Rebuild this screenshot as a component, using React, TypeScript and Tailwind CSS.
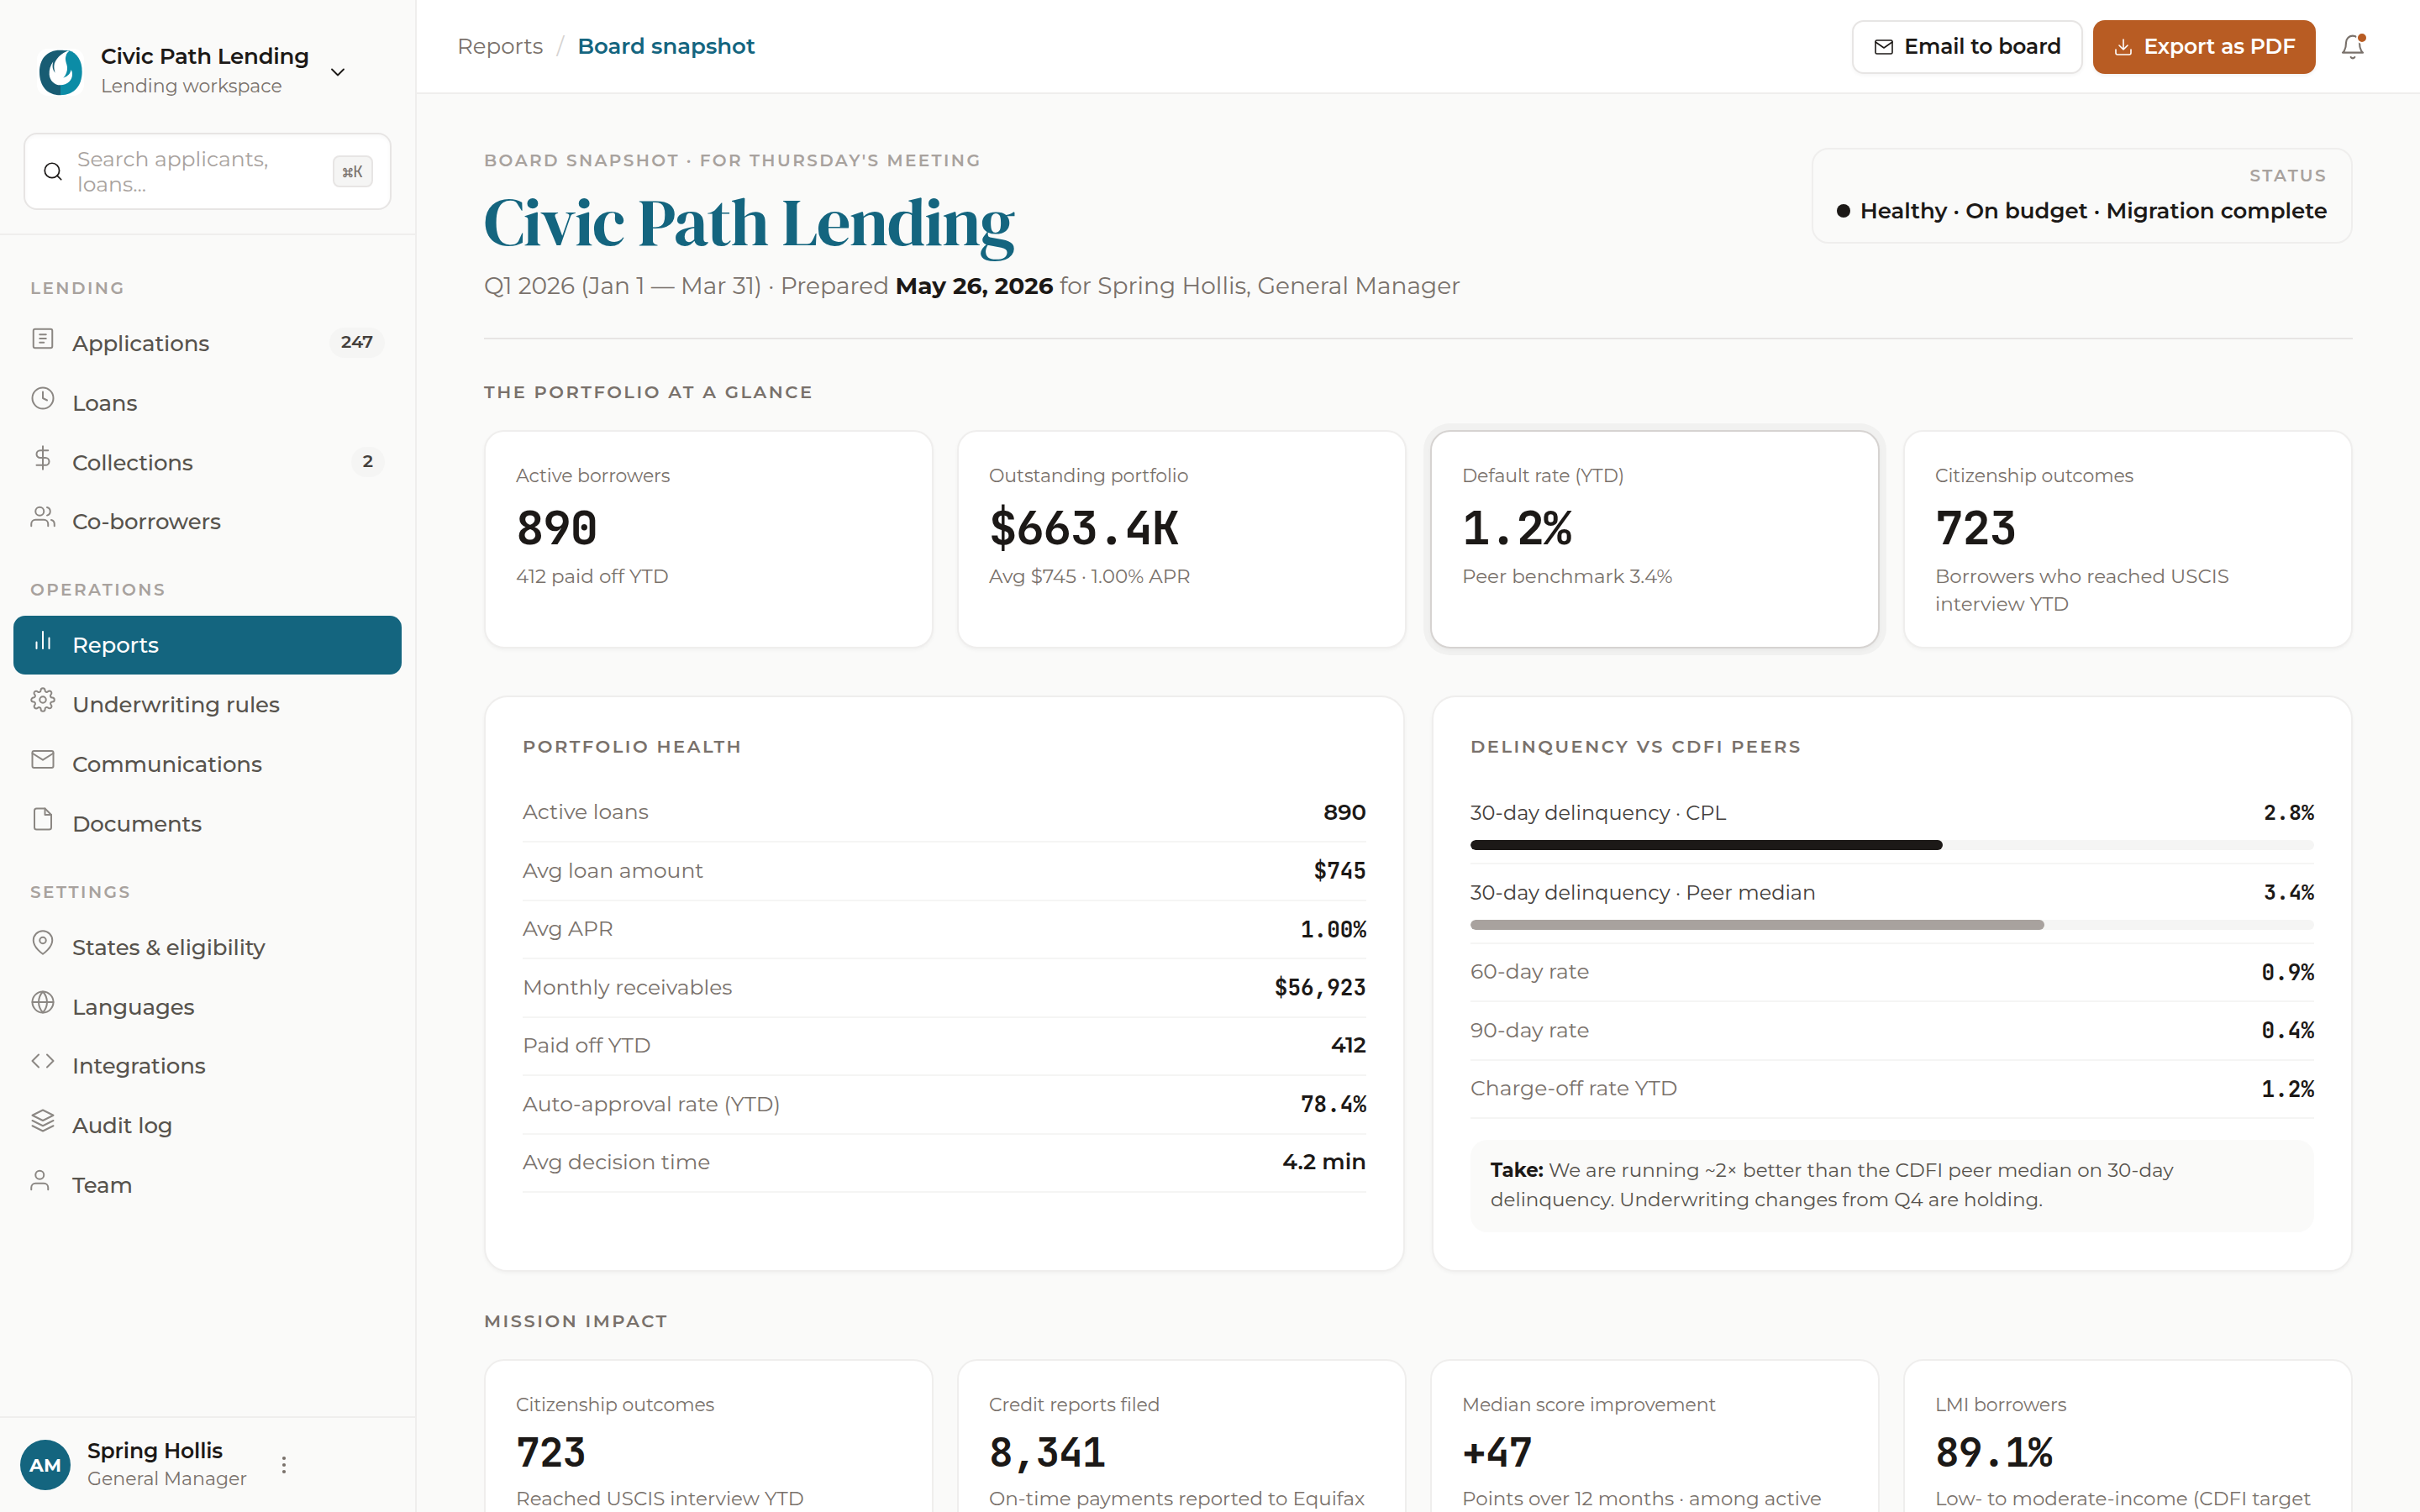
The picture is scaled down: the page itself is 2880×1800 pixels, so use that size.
import type { ReactNode } from 'react';
import clsx from 'clsx';

const navGroups = [
    {
        title: 'Lending',
        items: [
            { label: 'Applications', icon: 'applications', badge: '247' },
            { label: 'Loans', icon: 'clock' },
            { label: 'Collections', icon: 'dollar', badge: '2' },
            { label: 'Co-borrowers', icon: 'users' },
        ],
    },
    {
        title: 'Operations',
        items: [
            { label: 'Reports', icon: 'chart', active: true },
            { label: 'Underwriting rules', icon: 'settings' },
            { label: 'Communications', icon: 'mail' },
            { label: 'Documents', icon: 'file' },
        ],
    },
    {
        title: 'Settings',
        items: [
            { label: 'States & eligibility', icon: 'pin' },
            { label: 'Languages', icon: 'globe' },
            { label: 'Integrations', icon: 'code' },
            { label: 'Audit log', icon: 'layers' },
            { label: 'Team', icon: 'user' },
        ],
    },
];

const glance = [
    { label: 'Active borrowers', value: '890', note: '412 paid off YTD' },
    {
        label: 'Outstanding portfolio',
        value: '$663.4K',
        note: 'Avg $745 · 1.00% APR',
    },
    {
        label: 'Default rate (YTD)',
        value: '1.2%',
        note: 'Peer benchmark 3.4%',
        highlight: true,
    },
    {
        label: 'Citizenship outcomes',
        value: '723',
        note: 'Borrowers who reached USCIS interview YTD',
    },
];

const health = [
    { label: 'Active loans', value: '890' },
    { label: 'Avg loan amount', value: '$745', mono: true },
    { label: 'Avg APR', value: '1.00%', mono: true },
    { label: 'Monthly receivables', value: '$56,923', mono: true },
    { label: 'Paid off YTD', value: '412' },
    { label: 'Auto-approval rate (YTD)', value: '78.4%', mono: true },
    { label: 'Avg decision time', value: '4.2 min' },
];

const bars = [
    {
        label: '30-day delinquency · CPL',
        value: '2.8%',
        width: 56,
        color: 'bg-[#1c1917]',
    },
    {
        label: '30-day delinquency · Peer median',
        value: '3.4%',
        width: 68,
        color: 'bg-[#a8a29e]',
    },
];

const rates = [
    { label: '60-day rate', value: '0.9%', mono: true },
    { label: '90-day rate', value: '0.4%', mono: true },
    { label: 'Charge-off rate YTD', value: '1.2%', mono: true },
];

const impact = [
    {
        label: 'Citizenship outcomes',
        value: '723',
        note: 'Reached USCIS interview YTD',
    },
    {
        label: 'Credit reports filed',
        value: '8,341',
        note: 'On-time payments reported to Equifax',
    },
    {
        label: 'Median score improvement',
        value: '+47',
        note: 'Points over 12 months · among active',
    },
    {
        label: 'LMI borrowers',
        value: '89.1%',
        note: 'Low- to moderate-income (CDFI target',
    },
];

const icons: Record<string, ReactNode> = {
    applications: (
        <>
            <rect x="3" y="3" width="18" height="18" rx="1.6" />
            <path d="M9 8.2h6M9 12h6M9 15.8h4" />
        </>
    ),
    clock: (
        <>
            <circle cx="12" cy="12" r="10" />
            <path d="M12 6v6l4 2" />
        </>
    ),
    dollar: (
        <path d="M12 1v22M17 5H9.5a3.5 3.5 0 0 0 0 7h5a3.5 3.5 0 0 1 0 7H6" />
    ),
    users: (
        <>
            <path d="M17 21v-2a4 4 0 0 0-4-4H5a4 4 0 0 0-4 4v2" />
            <circle cx="9" cy="7" r="4" />
            <path d="M23 21v-2a4 4 0 0 0-3-3.87M16 3.13a4 4 0 0 1 0 7.75" />
        </>
    ),
    chart: <path d="M18 20V10M12 20V4M6 20v-6" />,
    settings: (
        <>
            <circle cx="12" cy="12" r="3" />
            <path d="M19.4 15a1.65 1.65 0 0 0 .33 1.82l.06.06a2 2 0 0 1 0 2.83 2 2 0 0 1-2.83 0l-.06-.06a1.65 1.65 0 0 0-1.82-.33 1.65 1.65 0 0 0-1 1.51V21a2 2 0 0 1-2 2 2 2 0 0 1-2-2v-.09A1.65 1.65 0 0 0 9 19.4a1.65 1.65 0 0 0-1.82.33l-.06.06a2 2 0 0 1-2.83 0 2 2 0 0 1 0-2.83l.06-.06a1.65 1.65 0 0 0 .33-1.82 1.65 1.65 0 0 0-1.51-1H3a2 2 0 0 1-2-2 2 2 0 0 1 2-2h.09A1.65 1.65 0 0 0 4.6 9a1.65 1.65 0 0 0-.33-1.82l-.06-.06a2 2 0 0 1 0-2.83 2 2 0 0 1 2.83 0l.06.06a1.65 1.65 0 0 0 1.82.33H9a1.65 1.65 0 0 0 1-1.51V3a2 2 0 0 1 2-2 2 2 0 0 1 2 2v.09a1.65 1.65 0 0 0 1 1.51 1.65 1.65 0 0 0 1.82-.33l.06-.06a2 2 0 0 1 2.83 0 2 2 0 0 1 0 2.83l-.06.06a1.65 1.65 0 0 0-.33 1.82V9a1.65 1.65 0 0 0 1.51 1H21a2 2 0 0 1 2 2 2 2 0 0 1-2 2h-.09a1.65 1.65 0 0 0-1.51 1z" />
        </>
    ),
    mail: (
        <>
            <rect x="2" y="4" width="20" height="16" rx="1.6" />
            <path d="m2 6.2 10 6.3 10-6.3" />
        </>
    ),
    file: (
        <>
            <path d="M14 2H6a2 2 0 0 0-2 2v16a2 2 0 0 0 2 2h12a2 2 0 0 0 2-2V8z" />
            <path d="M14 2v6h6" />
        </>
    ),
    pin: (
        <>
            <path d="M21 10c0 7-9 13-9 13s-9-6-9-13a9 9 0 0 1 18 0z" />
            <circle cx="12" cy="10" r="3" />
        </>
    ),
    globe: (
        <>
            <circle cx="12" cy="12" r="10" />
            <path d="M2 12h20M12 2a15.3 15.3 0 0 1 4 10 15.3 15.3 0 0 1-4 10 15.3 15.3 0 0 1-4-10 15.3 15.3 0 0 1 4-10z" />
        </>
    ),
    code: <path d="m16 18 6-6-6-6M8 6l-6 6 6 6" />,
    layers: (
        <>
            <path d="M12 2 2 7l10 5 10-5-10-5z" />
            <path d="m2 17 10 5 10-5M2 12l10 5 10-5" />
        </>
    ),
    user: (
        <>
            <path d="M17 21v-2a4 4 0 0 0-4-4H5a4 4 0 0 0-4 4v2" />
            <circle cx="9" cy="7" r="4" />
        </>
    ),
    search: (
        <>
            <circle cx="11" cy="11" r="8" />
            <path d="m21 21-4.35-4.35" />
        </>
    ),
    envelope: (
        <>
            <rect x="2" y="4" width="20" height="16" rx="1.6" />
            <path d="m2 6 10 7 10-7" />
        </>
    ),
    chevron: <path d="m6 9 6 6 6-6" />,
    download: (
        <path d="M21 15v4a2 2 0 0 1-2 2H5a2 2 0 0 1-2-2v-4M7 10l5 5 5-5M12 15V3" />
    ),
    bell: (
        <>
            <path d="M18 8A6 6 0 0 0 6 8c0 7-3 9-3 9h18s-3-2-3-9" />
            <path d="M13.73 21a2 2 0 0 1-3.46 0" />
        </>
    ),
};

function Icon({ name, className }: { name: string; className?: string }) {
    return (
        <svg
            viewBox="0 0 24 24"
            fill="none"
            stroke="currentColor"
            strokeWidth="1.6"
            strokeLinecap="round"
            strokeLinejoin="round"
            className={clsx('shrink-0', className)}
        >
            {icons[name]}
        </svg>
    );
}

function Logo() {
    return (
        <svg viewBox="0 0 168 168" className="size-14 shrink-0">
            <rect width="168" height="168" rx="38" fill="#fff" />
            <path
                d="M84 6h29c30 8 48 36 48 76 0 50-28 84-77 84z"
                fill="#0c8ca6"
            />
            <path
                d="M84 166C36 166 9 132 9 84S36 4 84 5c10 0 18 1 26 4L84 44z"
                fill="#185c73"
            />
            <path
                d="M112 7C90 14 62 38 61 62c0 10 2 18 4 24-8-8-12-22-7-40-10 14-15 29-14 46 2 22 18 38 40 38 24 0 43-18 42-40 0-6-2-10-4-15-3 13-10 23-28 29 10-10 15-24 14-38-2-16-10-26-4-42 2-7 6-12 10-14z"
                fill="#fff"
            />
        </svg>
    );
}

function Sidebar() {
    return (
        <aside className="flex w-[496px] shrink-0 flex-col border-r-2 border-[#efeeed]">
            <div className="h-[280px] border-b-2 border-[#efeeed] px-7 pt-[51px]">
                <div className="flex h-[107px] items-start pl-4">
                    <div className="mt-[7px]">
                        <Logo />
                    </div>
                    <div className="ml-5">
                        <p className="text-[26px] leading-8 font-semibold tracking-[-0.22px] whitespace-nowrap text-stone-900">
                            Civic Path Lending
                        </p>
                        <p className="mt-1.5 text-[22px] leading-7 text-stone-500">
                            Lending workspace
                        </p>
                    </div>
                    <Icon
                        name="chevron"
                        className="mt-[21px] ml-5 size-7 text-stone-900"
                    />
                </div>
                <div className="flex h-[92px] w-[438px] items-center rounded-2xl border-2 border-[#e7e5e4] bg-white px-5 shadow-[inset_0_2px_4px_rgba(28,25,23,0.03)]">
                    <Icon name="search" className="size-[26px] text-stone-900" />
                    <p className="ml-4 flex-1 text-[25px] leading-[30px] text-[#a8a29e]">
                        Search applicants, loans...
                    </p>
                    <kbd className="grid h-[38px] w-12 shrink-0 place-items-center rounded-lg border-2 border-[#e7e5e4] bg-[#f5f5f4] font-['JetBrains_Mono','DejaVu_Sans_Mono',monospace] text-[20px] leading-6 text-stone-500">
                        ⌘K
                    </kbd>
                </div>
            </div>
            <nav className="flex-1 px-4 pt-12">
                {navGroups.map((group) => (
                    <div key={group.title} className="mb-[31px]">
                        <h3 className="mb-4 pl-5 text-[20px] leading-[30px] font-semibold tracking-[2.45px] text-[#a8a29e] uppercase">
                            {group.title}
                        </h3>
                        {group.items.map((item) => (
                            <NavItem key={item.label} {...item} />
                        ))}
                    </div>
                ))}
            </nav>
            <div className="flex h-[114px] items-start border-t-2 border-[#efeeed] pt-[23px] pl-6">
                <span className="mt-[3px] grid size-[60px] place-items-center rounded-full bg-[#14657f] text-[22px] font-bold text-white">
                    AM
                </span>
                <div className="ml-5">
                    <p className="text-[25px] leading-8 font-semibold tracking-[-0.13px] text-stone-900">
                        Spring Hollis
                    </p>
                    <p className="mt-0.5 text-[22px] leading-8 text-stone-500">
                        General Manager
                    </p>
                </div>
                <svg
                    viewBox="0 0 28 28"
                    className="mt-[19px] ml-[30px] size-7 text-stone-500"
                    fill="currentColor"
                >
                    <circle cx="14" cy="6" r="2.1" />
                    <circle cx="14" cy="14" r="2.1" />
                    <circle cx="14" cy="22" r="2.1" />
                </svg>
            </div>
        </aside>
    );
}

function NavItem({
    label,
    icon,
    badge,
    active,
}: {
    label: string;
    icon: string;
    badge?: string;
    active?: boolean;
}) {
    return (
        <a
            className={clsx(
                'mb-[0.8px] flex h-[70px] items-start rounded-[14px] px-5',
                active ? 'bg-[#14657f] text-white' : 'text-stone-600',
            )}
        >
            <Icon
                name={icon}
                className={clsx(
                    'mt-3.5 size-[30px]',
                    !active && 'text-[#8b8783]',
                )}
            />
            <span className="ml-5 flex-1 text-[26px] leading-[70px] font-medium tracking-[-0.13px]">
                {label}
            </span>
            {badge && (
                <span className="mt-4 h-9 rounded-full bg-[#f5f5f4] px-3.5 text-[21px] leading-[34px] font-semibold text-[#44403c]">
                    {badge}
                </span>
            )}
        </a>
    );
}

function Topbar() {
    return (
        <header className="flex h-28 shrink-0 items-center border-b-2 border-[#efeeed] bg-white pr-12 pl-12">
            <div className="flex flex-1 text-[26px] leading-9">
                <span className="text-stone-500">Reports</span>
                <span className="mx-4 text-[#d6d3d1]">/</span>
                <span className="font-semibold text-[#14657f]">
                    Board snapshot
                </span>
            </div>
            <div className="mt-0.5 flex gap-3 text-[25px] font-semibold tracking-[-0.1px]">
                <button className="flex h-16 items-center gap-3 rounded-[14px] border-2 border-[#e7e5e4] bg-white px-6 pb-px text-stone-900 shadow-[0_2px_4px_rgba(28,25,23,0.04)]">
                    <Icon name="envelope" className="size-6" />
                    Email to board
                </button>
                <button className="flex h-16 items-center gap-3 rounded-[14px] bg-[#b85c23] px-6 pb-px text-white shadow-[0_2px_4px_rgba(28,25,23,0.06)]">
                    <Icon name="download" className="size-6" />
                    Export as PDF
                </button>
                <button className="relative grid size-16 place-items-center">
                    <Icon name="bell" className="size-8 text-stone-500" />
                    <span className="absolute top-3.5 right-3.5 size-[14px] rounded-full border-2 border-white bg-[#b85c23]" />
                </button>
            </div>
        </header>
    );
}

function SectionTitle({ children }: { children: ReactNode }) {
    return (
        <h2 className="text-[21px] leading-[31px] font-semibold tracking-[2.52px] text-stone-500 uppercase">
            {children}
        </h2>
    );
}

function StatCard({
    label,
    value,
    note,
    highlight,
    small,
}: {
    label: string;
    value: string;
    note: string;
    highlight?: boolean;
    small?: boolean;
}) {
    return (
        <div
            className={clsx(
                'rounded-3xl border-2 bg-white px-9 pt-9 text-stone-500',
                small ? 'h-[250px]' : 'h-[260px]',
                highlight
                    ? 'border-[#d6d3d1] shadow-[0_0_0_8px_rgba(28,25,23,0.04),0_2px_4px_rgba(28,25,23,0.04)]'
                    : 'border-[#efeeed]',
                !highlight && !small && 'shadow-[0_2px_4px_rgba(28,25,23,0.04)]',
            )}
        >
            <p className="text-[22px] leading-[33px] tracking-[-0.09px]">
                {label}
            </p>
            <p
                className={clsx(
                    "font-['JetBrains_Mono','DejaVu_Sans_Mono',monospace] font-semibold text-stone-900",
                    small
                        ? 'mt-3 text-[48px] leading-[56px] tracking-[-1.1px]'
                        : 'mt-[13px] text-[56px] leading-[64px] tracking-[-1.35px]',
                )}
            >
                {value}
            </p>
            <p
                className={clsx(
                    'text-[23px] leading-[33px]',
                    small ? 'mt-[11px]' : 'mt-2.5',
                )}
            >
                {note}
            </p>
        </div>
    );
}

function Panel({ title, children }: { title: string; children: ReactNode }) {
    return (
        <section className="h-[686px] rounded-[28px] border-2 border-[#efeeed] bg-white px-11 pt-[43px] shadow-[0_2px_4px_rgba(28,25,23,0.04)]">
            <SectionTitle>{title}</SectionTitle>
            <div className="mt-[30px]">{children}</div>
        </section>
    );
}

function Row({
    label,
    value,
    mono,
}: {
    label: string;
    value: string;
    mono?: boolean;
}) {
    return (
        <div className="flex h-[69.45px] items-center justify-between border-b-2 border-[#f5f5f4] pb-px">
            <span className="text-[25px] text-stone-500">{label}</span>
            <span
                className={clsx(
                    'text-[26px] font-semibold text-stone-900',
                    mono &&
                        "font-['JetBrains_Mono','DejaVu_Sans_Mono',monospace]",
                )}
            >
                {value}
            </span>
        </div>
    );
}

export default function App() {
    return (
        <div className="flex h-[1800px] w-[2880px] overflow-hidden bg-[#fafaf9] font-['Montserrat','Inter',sans-serif]">
            <Sidebar />
            <div className="flex min-w-0 flex-1 flex-col">
                <Topbar />
                <main className="flex-1 overflow-hidden px-20 pt-16">
                    <div className="flex items-start justify-between border-b-2 border-[#e7e5e4] pb-10">
                        <div>
                            <p className="text-[20px] leading-[30px] font-semibold tracking-[2.4px] text-[#a8a29e] uppercase">
                                Board snapshot · For Thursday's meeting
                            </p>
                            <h1 className="mt-3.5 font-['DM_Serif_Display','Liberation_Serif',serif] text-[80px] leading-[88px] tracking-[-1.45px] text-[#14657f]">
                                Civic Path Lending
                            </h1>
                            <p className="mt-2.5 text-[28px] leading-[44px] text-stone-500">
                                Q1 2026 (Jan 1 — Mar 31) · Prepared{' '}
                                <b className="font-bold text-stone-900">
                                    May 26, 2026
                                </b>{' '}
                                for Spring Hollis, General Manager
                            </p>
                        </div>
                        <div className="h-[114px] rounded-[20px] border-2 border-[#efeeed] px-7 pt-[17px] text-right">
                            <p className="text-[20px] leading-7 font-semibold tracking-[2.4px] text-[#a8a29e]">
                                STATUS
                            </p>
                            <p className="mt-2.5 flex items-center gap-3 text-[26px] leading-9 font-semibold text-stone-900">
                                <span className="size-4 rounded-full bg-stone-900" />
                                Healthy · On budget · Migration complete
                            </p>
                        </div>
                    </div>

                    <div className="mt-[47px]">
                        <SectionTitle>The portfolio at a glance</SectionTitle>
                    </div>
                    <div className="mt-[30px] grid grid-cols-4 gap-7">
                        {glance.map((card) => (
                            <StatCard key={card.label} {...card} />
                        ))}
                    </div>

                    <div className="mt-14 grid grid-cols-2 gap-8">
                        <Panel title="Portfolio health">
                            {health.map((row) => (
                                <Row key={row.label} {...row} />
                            ))}
                        </Panel>
                        <Panel title="Delinquency vs CDFI peers">
                            {bars.map((bar) => (
                                <div
                                    key={bar.label}
                                    className="h-[95px] border-b-2 border-[#f5f5f4]"
                                >
                                    <div className="flex h-[66px] items-center justify-between pt-0.5">
                                        <span className="text-[24px] text-[#44403c]">
                                            {bar.label}
                                        </span>
                                        <span className="font-['JetBrains_Mono','DejaVu_Sans_Mono',monospace] text-[25px] font-semibold text-stone-900">
                                            {bar.value}
                                        </span>
                                    </div>
                                    <div className="h-3 overflow-hidden rounded-full bg-[#f5f5f4]">
                                        <div
                                            className={clsx(
                                                'h-full rounded-full',
                                                bar.color,
                                            )}
                                            style={{ width: `${bar.width}%` }}
                                        />
                                    </div>
                                </div>
                            ))}
                            {rates.map((row) => (
                                <Row key={row.label} {...row} />
                            ))}
                            <p className="mt-[25px] h-[110px] rounded-[20px] bg-[#fafaf9] px-6 pt-[19px] text-[23px] leading-[34.5px] text-stone-600">
                                <b className="font-bold text-stone-900">
                                    Take:
                                </b>{' '}
                                We are running ~2× better than the CDFI peer
                                median on 30-day delinquency. Underwriting
                                changes from Q4 are holding.
                            </p>
                        </Panel>
                    </div>

                    <div className="mt-[43px]">
                        <SectionTitle>Mission impact</SectionTitle>
                    </div>
                    <div className="mt-[30px] grid grid-cols-4 gap-7">
                        {impact.map((card) => (
                            <StatCard key={card.label} {...card} small />
                        ))}
                    </div>
                </main>
            </div>
        </div>
    );
}
